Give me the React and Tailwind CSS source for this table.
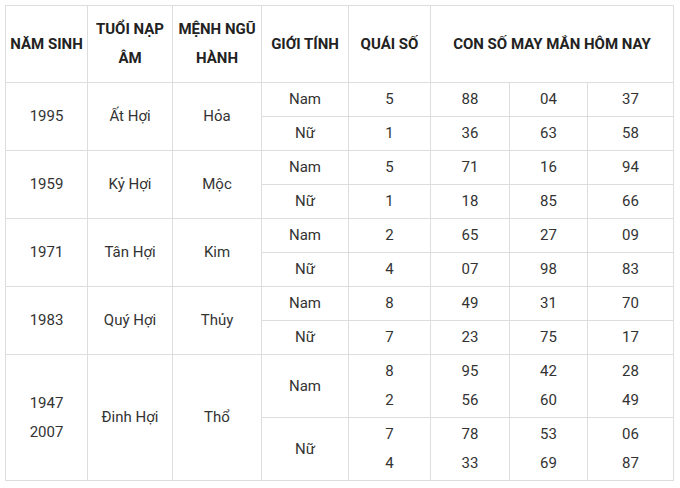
import React from 'react'

const groups = [
  { year: ['1995'], tuoi: 'Ất Hợi', menh: 'Hỏa', rows: [
    { g: 'Nam', q: ['5'], n: [['88'], ['04'], ['37']] },
    { g: 'Nữ', q: ['1'], n: [['36'], ['63'], ['58']] },
  ] },
  { year: ['1959'], tuoi: 'Kỷ Hợi', menh: 'Mộc', rows: [
    { g: 'Nam', q: ['5'], n: [['71'], ['16'], ['94']] },
    { g: 'Nữ', q: ['1'], n: [['18'], ['85'], ['66']] },
  ] },
  { year: ['1971'], tuoi: 'Tân Hợi', menh: 'Kim', rows: [
    { g: 'Nam', q: ['2'], n: [['65'], ['27'], ['09']] },
    { g: 'Nữ', q: ['4'], n: [['07'], ['98'], ['83']] },
  ] },
  { year: ['1983'], tuoi: 'Quý Hợi', menh: 'Thủy', rows: [
    { g: 'Nam', q: ['8'], n: [['49'], ['31'], ['70']] },
    { g: 'Nữ', q: ['7'], n: [['23'], ['75'], ['17']] },
  ] },
  { year: ['1947', '2007'], tuoi: 'Đinh Hợi', menh: 'Thổ', rows: [
    { g: 'Nam', q: ['8', '2'], n: [['95', '56'], ['42', '60'], ['28', '49']] },
    { g: 'Nữ', q: ['7', '4'], n: [['78', '33'], ['53', '69'], ['06', '87']] },
  ] },
]

const cell = 'border border-[#dddddd] text-center align-middle p-0'

function Lines({ items }) {
  return items.map((t, i) => <div key={i}>{t}</div>)
}

export default function App() {
  return (
    <div className="bg-white w-[680px] h-[488px] pl-[5px] pt-[5px]" style={{ fontFamily: 'Roboto, "Noto Sans", sans-serif' }}>
      <table className="table-fixed border-collapse w-[668px] text-[15px] leading-[29px] text-[#333333]">
        <colgroup>
          <col className="w-[82px]" />
          <col className="w-[85px]" />
          <col className="w-[89px]" />
          <col className="w-[87px]" />
          <col className="w-[82px]" />
          <col className="w-[79px]" />
          <col className="w-[78px]" />
          <col className="w-[86px]" />
        </colgroup>
        <thead>
          <tr className="h-[77px] font-bold text-[#222222]">
            <th className={cell}>NĂM SINH</th>
            <th className={cell}>TUỔI NẠP<br />ÂM</th>
            <th className={cell}>MỆNH NGŨ<br />HÀNH</th>
            <th className={cell}>GIỚI TÍNH</th>
            <th className={cell}>QUÁI SỐ</th>
            <th className={cell} colSpan={3}>CON SỐ MAY MẮN HÔM NAY</th>
          </tr>
        </thead>
        <tbody>
          {groups.map((grp) =>
            grp.rows.map((r, i) => {
              const tall = r.q.length > 1
              return (
                <tr key={grp.year[0] + r.g} className={tall ? 'h-[63px]' : 'h-[34px]'}>
                  {i === 0 && (
                    <>
                      <td className={cell} rowSpan={2}><Lines items={grp.year} /></td>
                      <td className={cell} rowSpan={2}>{grp.tuoi}</td>
                      <td className={cell} rowSpan={2}>{grp.menh}</td>
                    </>
                  )}
                  <td className={cell}>{r.g}</td>
                  <td className={cell}><Lines items={r.q} /></td>
                  {r.n.map((n, k) => (
                    <td key={k} className={cell}><Lines items={n} /></td>
                  ))}
                </tr>
              )
            })
          )}
        </tbody>
      </table>
    </div>
  )
}
